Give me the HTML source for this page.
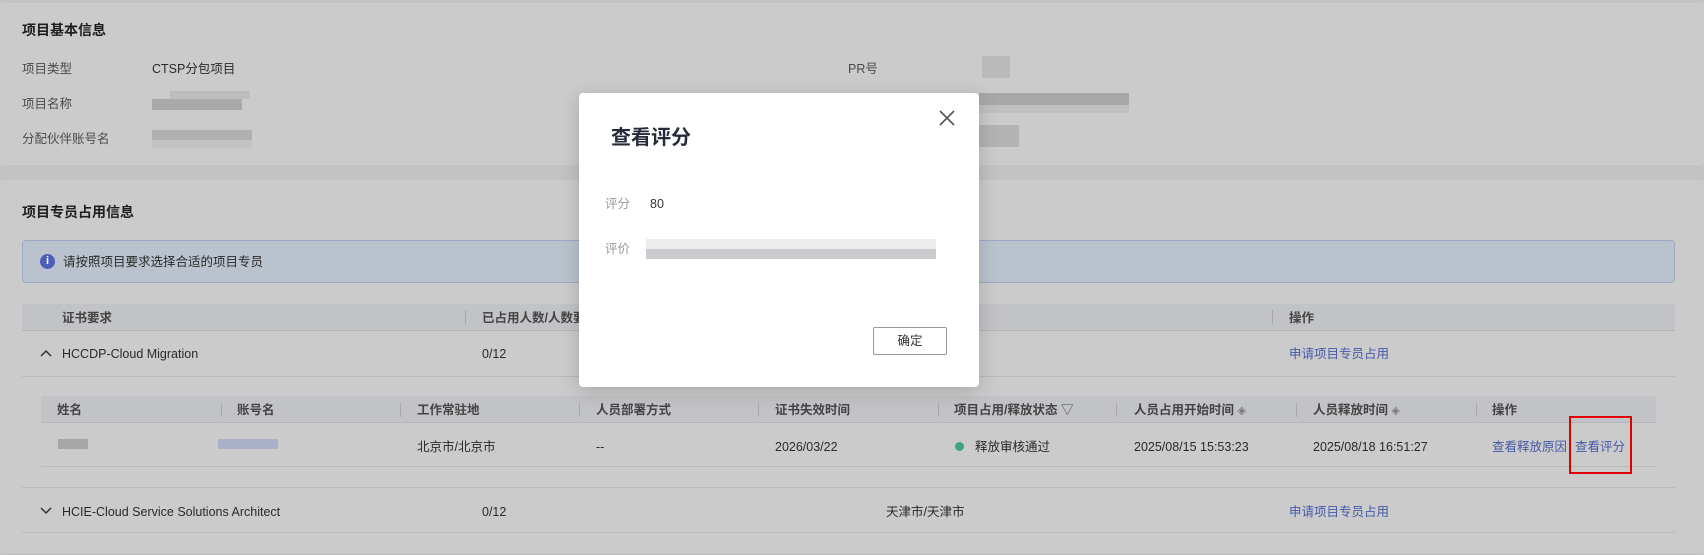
<!DOCTYPE html>
<html><head><meta charset="utf-8"><style>
*{margin:0;padding:0;box-sizing:border-box}
body{width:1704px;height:555px;overflow:hidden;background:#c3c3c3;font-family:"Liberation Sans","Noto Sans CJK SC",sans-serif;font-size:12.5px;color:#2a2a2a;position:relative}
.a{position:absolute;white-space:nowrap;line-height:18px}
.card{position:absolute;background:#cbcbcb;border-radius:4px}
.h{font-weight:bold;font-size:14px;color:#1e1e1e}
.lbl{color:#4a4a4a}
.lnk{color:#4658a8}
.line{position:absolute;height:1px;background:#b9b9b9}
.th{position:absolute;background:#c2c3c6;border-bottom:1px solid #b3b5ba}
.dv{position:absolute;width:1px;height:14px;background:#a9a9ab}
.bl{position:absolute;background:#b2b2b2}
.b{font-weight:bold;color:#444}
</style></head><body>
<div class="card" style="left:0;top:3px;width:1704px;height:162px"></div>
<div class="card" style="left:0;top:180px;width:1704px;height:373px"></div>

<div class="a h" style="left:22px;top:21px">项目基本信息</div>
<div class="a lbl" style="left:22px;top:60px">项目类型</div>
<div class="a" style="left:152px;top:60px">CTSP分包项目</div>
<div class="a lbl" style="left:22px;top:95px">项目名称</div>
<div class="bl" style="left:152px;top:99px;width:90px;height:11px;background:#a9a9a9"></div>
<div class="bl" style="left:170px;top:91px;width:80px;height:8px;background:#bdbdbd"></div>
<div class="a lbl" style="left:22px;top:130px">分配伙伴账号名</div>
<div class="bl" style="left:152px;top:130px;width:100px;height:10px;background:#b0b0b0"></div>
<div class="bl" style="left:152px;top:140px;width:100px;height:8px;background:#c2c2c2"></div>
<div class="a lbl" style="left:848px;top:60px">PR号</div>
<div class="bl" style="left:982px;top:56px;width:28px;height:22px;background:#bababa"></div>
<div class="bl" style="left:979px;top:93px;width:150px;height:12px;background:#a8a8a8"></div>
<div class="bl" style="left:979px;top:105px;width:150px;height:8px;background:#c0c0c0"></div>
<div class="bl" style="left:979px;top:125px;width:40px;height:22px;background:#b3b3b3"></div>

<div class="a h" style="left:22px;top:203px">项目专员占用信息</div>
<div class="a" style="left:22px;top:240px;width:1653px;height:43px;background:#bac3cd;border:1px solid #9ea9c6;border-radius:4px"></div>
<div class="a" style="left:40px;top:254px;width:15px;height:15px;border-radius:50%;background:#4a5fb8;color:#fff;font-size:11px;font-weight:bold;text-align:center;line-height:15px">i</div>
<div class="a" style="left:63px;top:253px">请按照项目要求选择合适的项目专员</div>

<div class="th" style="left:22px;top:304px;width:1653px;height:27px"></div>
<div class="a b" style="left:62px;top:309px">证书要求</div>
<div class="dv" style="left:465px;top:310px"></div>
<div class="a b" style="left:482px;top:309px">已占用人数/人数要求</div>
<div class="dv" style="left:1272px;top:310px"></div>
<div class="a b" style="left:1289px;top:309px">操作</div>
<svg class="a" style="left:40px;top:348px" width="12" height="10" viewBox="0 0 12 10"><path d="M1 8L6 3L11 8" stroke="#333" stroke-width="1.5" fill="none"/></svg>
<div class="a" style="left:62px;top:345px">HCCDP-Cloud Migration</div>
<div class="a" style="left:482px;top:345px">0/12</div>
<div class="a lnk" style="left:1289px;top:345px">申请项目专员占用</div>
<div class="line" style="left:22px;top:376px;width:1653px"></div>

<div class="th" style="left:41px;top:396px;width:1615px;height:27px"></div>
<div class="a b" style="left:57px;top:401px">姓名</div>
<div class="dv" style="left:221px;top:403px"></div>
<div class="a b" style="left:237px;top:401px">账号名</div>
<div class="dv" style="left:400px;top:403px"></div>
<div class="a b" style="left:417px;top:401px">工作常驻地</div>
<div class="dv" style="left:579px;top:403px"></div>
<div class="a b" style="left:596px;top:401px">人员部署方式</div>
<div class="dv" style="left:758px;top:403px"></div>
<div class="a b" style="left:775px;top:401px">证书失效时间</div>
<div class="dv" style="left:938px;top:403px"></div>
<div class="a b" style="left:954px;top:401px">项目占用/释放状态 <span style="font-weight:normal">▽</span></div>
<div class="dv" style="left:1116px;top:403px"></div>
<div class="a b" style="left:1134px;top:401px">人员占用开始时间 <span style="font-weight:normal;font-size:11px;color:#777">◈</span></div>
<div class="dv" style="left:1296px;top:403px"></div>
<div class="a b" style="left:1313px;top:401px">人员释放时间 <span style="font-weight:normal;font-size:11px;color:#777">◈</span></div>
<div class="dv" style="left:1476px;top:403px"></div>
<div class="a b" style="left:1492px;top:401px">操作</div>

<div class="bl" style="left:58px;top:439px;width:30px;height:10px;background:#a7a7a7"></div>
<div class="bl" style="left:218px;top:439px;width:60px;height:10px;background:#aab0c8"></div>
<div class="a" style="left:417px;top:438px">北京市/北京市</div>
<div class="a" style="left:596px;top:438px">--</div>
<div class="a" style="left:775px;top:438px">2026/03/22</div>
<div class="a" style="left:955px;top:442px;width:9px;height:9px;border-radius:50%;background:#3fa37f"></div>
<div class="a" style="left:975px;top:438px">释放审核通过</div>
<div class="a" style="left:1134px;top:438px">2025/08/15 15:53:23</div>
<div class="a" style="left:1313px;top:438px">2025/08/18 16:51:27</div>
<div class="a lnk" style="left:1492px;top:438px">查看释放原因</div>
<div class="a lnk" style="left:1575px;top:438px">查看评分</div>
<div class="line" style="left:41px;top:466px;width:1615px"></div>
<div class="a" style="left:1569px;top:416px;width:63px;height:58px;border:2px solid #e00000"></div>

<div class="line" style="left:22px;top:487px;width:1653px"></div>
<svg class="a" style="left:40px;top:506px" width="12" height="10" viewBox="0 0 12 10"><path d="M1 2L6 7L11 2" stroke="#333" stroke-width="1.5" fill="none"/></svg>
<div class="a" style="left:62px;top:503px">HCIE-Cloud Service Solutions Architect</div>
<div class="a" style="left:482px;top:503px">0/12</div>
<div class="a" style="left:886px;top:503px">天津市/天津市</div>
<div class="a lnk" style="left:1289px;top:503px">申请项目专员占用</div>
<div class="line" style="left:22px;top:532px;width:1653px"></div>

<div class="a" style="left:579px;top:93px;width:400px;height:294px;background:#fff;border-radius:4px;box-shadow:0 4px 20px rgba(0,0,0,.18)"></div>
<div class="a" style="left:611px;top:126px;font-size:20px;line-height:24px;font-weight:bold;color:#252b3a">查看评分</div>
<svg class="a" style="left:938px;top:109px" width="18" height="18" viewBox="0 0 18 18"><path d="M2 2L16 16M16 2L2 16" stroke="#555" stroke-width="1.6" fill="none"/></svg>
<div class="a" style="left:605px;top:195px;color:#999">评分</div>
<div class="a" style="left:650px;top:195px;color:#333">80</div>
<div class="a" style="left:605px;top:240px;color:#999">评价</div>
<div class="bl" style="left:646px;top:239px;width:290px;height:10px;background:#ececec"></div>
<div class="bl" style="left:646px;top:249px;width:290px;height:10px;background:#cbcbcf"></div>
<div class="a" style="left:873px;top:327px;width:74px;height:28px;border:1px solid #999;border-radius:2px;text-align:center;line-height:26px;color:#333">确定</div>
</body></html>
